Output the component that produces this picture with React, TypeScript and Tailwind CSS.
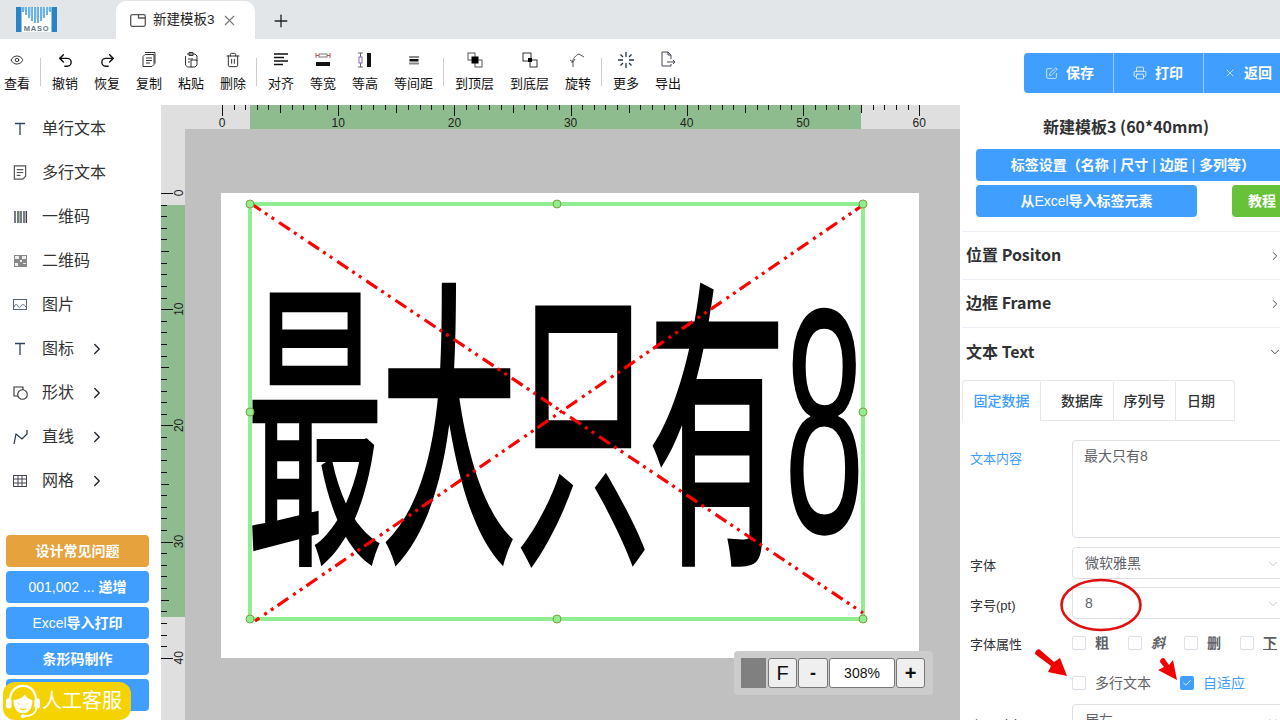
import React from 'react';
import { ChevronDown, ChevronRight, Check, X, Plus, Eye, Undo2, Redo2, Trash2, SquarePen, Printer } from 'lucide-react';

const UNIT = 11.62;

const Sep = () => <div className="h-[28px] w-[6px] shrink-0 pl-[2px]"><div className="h-full w-[1px] bg-[#cccccc]" /></div>;

const ToolIcon = ({ children }: { children: React.ReactNode }) => (
    <svg viewBox="0 0 18 18" className="h-[18px] w-[18px]" fill="none" stroke="#333" strokeWidth="1">{children}</svg>
);

const tools1 = [
    { label: '撤销', icon: <Undo2 className="h-[17px] w-[17px] text-[#111]" strokeWidth={2} /> },
    { label: '恢复', icon: <Redo2 className="h-[17px] w-[17px] text-[#111]" strokeWidth={2} /> },
    { label: '复制', icon: <ToolIcon><path d="M5 3.500h9v10l-2 2H3v-10zM5 1.500h10v11M6 7h6M6 9.500h6M6 12h4" /></ToolIcon> },
    { label: '粘贴', icon: <ToolIcon><path d="M5 3h8l2 2v5M3.500 5v9l2 2h4M7 1.500h4v3H7zM9 9h6v5l-2 2H9zM6 8h5M6 11h2" /></ToolIcon> },
    { label: '删除', icon: <Trash2 className="h-[16px] w-[16px] text-[#222]" strokeWidth={1.4} /> },
];

const tools2 = [
    { label: '对齐', w: 'w-[42px]', icon: <svg viewBox="0 0 18 18" className="h-[18px] w-[18px]"><path d="M2 3h14M2 6.500h10M2 10h14M2 13.500h9" stroke="#111" strokeWidth="1.500" /></svg> },
    { label: '等宽', w: 'w-[42px]', icon: <svg viewBox="0 0 18 18" className="h-[18px] w-[18px]"><path d="M2 2v5M16 2v5M2 4.500h14" stroke="#b55" fill="none" /><rect x="5" y="3" width="8" height="3" fill="#fff" stroke="#777" /><rect x="2" y="11" width="14" height="4" fill="#111" /></svg> },
    { label: '等高', w: 'w-[42px]', icon: <svg viewBox="0 0 18 18" className="h-[18px] w-[18px]"><path d="M2 2h5M2 16h5M4.500 2v14" stroke="#666" fill="none" /><rect x="3" y="6" width="3" height="6" fill="#fff" stroke="#86c" /><rect x="11" y="2" width="4" height="14" fill="#111" /></svg> },
    { label: '等间距', w: 'w-[55px]', icon: <svg viewBox="0 0 18 18" className="h-[18px] w-[18px]"><rect x="4" y="5" width="10" height="2" fill="#888" /><rect x="4.500" y="8" width="9" height="2.500" fill="#111" /><rect x="4" y="11.500" width="10" height="2" fill="#888" /></svg> },
];

const tools3 = [
    { label: '到顶层', w: 'w-[55px]', icon: <ToolIcon><rect x="2" y="2" width="7" height="7" stroke="#555" /><rect x="9" y="9" width="7" height="7" stroke="#555" /><rect x="5.500" y="5.500" width="7" height="7" fill="#000" stroke="none" /></ToolIcon> },
    { label: '到底层', w: 'w-[55px]', icon: <ToolIcon><rect x="2" y="2" width="8" height="8" stroke="#333" /><rect x="9" y="9" width="7" height="7" stroke="#333" /><rect x="7" y="7" width="4" height="4" fill="#000" stroke="none" /></ToolIcon> },
    { label: '旋转', w: 'w-[42px]', icon: <ToolIcon><path d="M3 12c1-5 4-8 7-9M10 3l5 3M1 9l3 2 2-3M4 11v5" stroke="#555" /></ToolIcon> },
];

const ToolItem = ({ label, icon, w = 'w-[42px]' }: { label: string; icon: React.ReactNode; w?: string }) => (
    <div className={`flex shrink-0 flex-col items-center ${w}`}>
        <div className="flex h-[20px] items-center justify-center">{icon}</div>
        <span className="mt-[5px] text-[13px] leading-[18px] text-[#111]">{label}</span>
    </div>
);

const Toolbar = () => (
    <div className="flex h-[66px] shrink-0 items-start bg-white pt-[11px]">
        <div className="flex items-center">
            <div className="w-[34px]"><ToolItem w="w-[34px]" label="查看" icon={<Eye className="h-[14px] w-[14px] text-[#222]" strokeWidth={1.5} />} /></div>
            <div className="w-[4px]" />
            <Sep />
            {tools1.map(t => <ToolItem key={t.label} {...t} />)}
            <Sep />
            {tools2.map(t => <ToolItem key={t.label} {...t} />)}
            <Sep />
            {tools3.map(t => <ToolItem key={t.label} {...t} />)}
            <Sep />
            <ToolItem label="更多" icon={
                <svg viewBox="0 0 18 18" className="h-[18px] w-[18px]" stroke="#234" strokeWidth="1.300">
                    <path d="M9 1v5M9 12v5M1 9h5M12 9h5M3.500 3.500l2.500 2.500M14.500 3.500L12 6M3.500 14.500L6 12M14.500 14.500L12 12" />
                </svg>
            } />
            <ToolItem label="导出" icon={
                <ToolIcon><path d="M12 8V4l-3-3H3v14h9v-2M9 1v3h3M8 11h8M14 9l2 2-2 2" stroke="#445" /></ToolIcon>
            } />
        </div>
        <div className="ml-auto mt-[3px] flex h-[40px] w-[256px] overflow-hidden rounded-l-[4px]">
            <div className="flex w-[89px] shrink-0 items-center gap-[8px] bg-[#409eff] pl-[21px] text-[14px] font-bold text-white">
                <SquarePen className="h-[13px] w-[13px]" strokeWidth={1.3} />保存
            </div>
            <div className="flex w-[90px] shrink-0 items-center gap-[8px] border-l border-[#a0cfff] bg-[#409eff] pl-[19px] text-[14px] font-bold text-white">
                <Printer className="h-[14px] w-[14px]" strokeWidth={1.3} />打印
            </div>
            <div className="flex w-[90px] shrink-0 items-center gap-[8px] border-l border-[#a0cfff] bg-[#409eff] pl-[20px] text-[14px] font-bold text-white">
                <X className="h-[12px] w-[12px]" strokeWidth={1.3} />返回
            </div>
        </div>
    </div>
);

const Logo = () => (
    <svg viewBox="0 0 41 25" className="h-[25px] w-[41px]">
        <rect width="41" height="25" fill="#2a83c4" />
        <rect x="5.500" width="30" height="25" fill="#fff" />
        <path d="M7 0v5M10 0v8M13 0v11M16 0v14M19 0v16M22 0v16M25 0v14M28 0v11M31 0v8M34 0v5" stroke="#5aa9e0" strokeWidth="1.800" />
        <path d="M8.500 0v4M14.500 0v9M20.500 0v12M26.500 0v9M32.500 0v4" stroke="#bcdcf4" strokeWidth="1.200" />
        <text x="20.500" y="24" textAnchor="middle" fontSize="7.500" fontWeight="bold" fill="#667788" letterSpacing="0.800">MASO</text>
    </svg>
);

const TabBar = () => (
    <div className="relative flex h-[39px] shrink-0 items-end bg-[#e3e6e9]">
        <div className="ml-[16px] mb-[7px] w-[100px]"><Logo /></div>
        <div className="flex h-[38px] w-[139px] items-center rounded-t-[10px] bg-white pl-[14px]">
            <svg viewBox="0 0 16 13" className="h-[13px] w-[16px]" fill="none" stroke="#555" strokeWidth="1.300"><rect x="0.700" y="0.700" width="14.600" height="11.600" rx="1.500" /><path d="M8.500 1v3h7" /></svg>
            <span className="ml-[7px] text-[13.500px] text-[#222]">新建模板3</span>
            <X className="ml-[6px] h-[17px] w-[17px] text-[#777]" strokeWidth={1.6} />
        </div>
        <Plus className="mb-[8px] ml-[16px] h-[20px] w-[20px] text-[#222]" strokeWidth={1.6} />
    </div>
);

const SideIcon = ({ kind }: { kind: string }) => {
    if (kind === 'T') return <svg viewBox="0 0 12 13" className="h-[13px] w-[12px]" fill="none" stroke="#2d4560" strokeWidth="1.300"><path d="M1 1.500h10M6 1.500V13" /></svg>;
    if (kind === 'doc') return <svg viewBox="0 0 14 16" className="h-[15px] w-[14px]" fill="none" stroke="#555" strokeWidth="1.300"><path d="M1 1h12v11l-3 3H1zM3.500 5h7M3.500 8h7M3.500 11h4" /></svg>;
    if (kind === 'bar') return <svg viewBox="0 0 13 12" className="h-[12px] w-[13px]"><path d="M1 0v12M4 0v12M7 0v12M10 0v12M12.300 0v12" stroke="#334" strokeWidth="1.300" /><path d="M5.500 0v12" stroke="#9c8" strokeWidth="1" /></svg>;
    if (kind === 'qr') return <svg viewBox="0 0 13 12" className="h-[12px] w-[13px]"><rect width="13" height="12" fill="#888" /><path d="M1 1h4v3H1zM8 1h4v3H8zM1 8h3v3H1zM6 5h2v2H6zM9 8h3v1H9z" fill="#eee" /></svg>;
    if (kind === 'img') return <svg viewBox="0 0 14 11" className="h-[11px] w-[14px]" fill="none" stroke="#567" strokeWidth="1"><rect x="0.500" y="0.500" width="13" height="10" /><path d="M1 8c1-3 3-3 4-1s2 2 3 0 3-2 5 1" /></svg>;
    if (kind === 'shape') return <svg viewBox="0 0 15 14" className="h-[14px] w-[15px]" fill="none" stroke="#333" strokeWidth="1.100"><path d="M5 10H1V1h9v3" /><circle cx="9.500" cy="8.500" r="4.800" /></svg>;
    if (kind === 'line') return <svg viewBox="0 0 15 15" className="h-[15px] w-[15px]" fill="none" stroke="#234" strokeWidth="1.200"><path d="M1 15L3 5l6 5 5-5V1" /></svg>;
    return <svg viewBox="0 0 14 12" className="h-[12px] w-[14px]" fill="none" stroke="#445" strokeWidth="1"><rect x="0.500" y="0.500" width="13" height="11" /><path d="M0 4h14M0 8h14M5 0v12M9 0v12" /></svg>;
};

const sideItems = [
    { label: '单行文本', kind: 'T' },
    { label: '多行文本', kind: 'doc' },
    { label: '一维码', kind: 'bar' },
    { label: '二维码', kind: 'qr' },
    { label: '图片', kind: 'img' },
    { label: '图标', kind: 'T', more: true },
    { label: '形状', kind: 'shape', more: true },
    { label: '直线', kind: 'line', more: true },
    { label: '网格', kind: 'grid', more: true },
];

// the latin part of these labels stays regular, only the chinese is bold
const Thin = ({ children }: { children: React.ReactNode }) => <span className="font-normal">{children}</span>;

const sideButtons = [
    { label: <>设计常见问题</>, bg: 'bg-[#e6a23c]' },
    { label: <><Thin>001,002 ... </Thin>递增</>, bg: 'bg-[#409eff]' },
    { label: <><Thin>Excel</Thin>导入打印</>, bg: 'bg-[#409eff]' },
    { label: <>条形码制作</>, bg: 'bg-[#409eff]' },
    { label: null, bg: 'bg-[#409eff]' },
];

const Sidebar = () => (
    <div className="relative flex w-[161px] shrink-0 flex-col bg-white">
        <div className="pt-[1px]">
            {sideItems.map(item => (
                <div key={item.label} className="flex h-[44px] items-center pt-[1px] text-[16px] text-[#333]">
                    <div className="flex w-[42px] justify-center pl-[6px] pr-[8px]"><SideIcon kind={item.kind} /></div>
                    <span>{item.label}</span>
                    {item.more && <ChevronRight className="ml-[14px] h-[18px] w-[18px] text-[#223]" strokeWidth={1.8} />}
                </div>
            ))}
        </div>
        <div className="mt-[33px] flex flex-col gap-[4px] px-[6px]">
            {sideButtons.map((b, i) => (
                <div key={i} className={`flex h-[32px] w-[143px] items-center justify-center whitespace-pre rounded-[4px] text-[14px] font-bold text-white ${b.bg}`}>
                    {b.label}
                </div>
            ))}
        </div>
        <div className="absolute bottom-0 left-[3px] flex h-[38px] w-[128px] items-center rounded-[12px] bg-[#f5d300]">
            <svg viewBox="0 0 38 38" className="h-[36px] w-[38px] shrink-0" fill="none">
                <path d="M6 20C6 9 12 3 20 3s14 6 14 17" stroke="#fff" strokeWidth="2.500" />
                <rect x="2" y="16" width="6" height="11" rx="3" fill="#fff" />
                <rect x="32" y="16" width="6" height="11" rx="3" fill="#fff" />
                <path d="M10 18c4 0 10-2 12-6 2 4 5 6 8 6 0 9-4 14-10 14S10 27 10 18z" fill="#fff" />
                <path d="M34 26c0 5-4 9-12 9" stroke="#fff" strokeWidth="1.800" />
                <circle cx="20" cy="35" r="2.200" fill="#fff" />
                <path d="M15 22h1M24 22h1M17 27c2 1.500 4 1.500 6 0" stroke="#f5d300" strokeWidth="1.400" />
            </svg>
            <span className="ml-[1px] text-[20px] text-white">人工客服</span>
        </div>
    </div>
);

const HRuler = () => {
    const ticks = Array.from({ length: 61 }, (_, i) => i);
    return (
        <svg width="799" height="24" className="block shrink-0">
            <rect width="799" height="24" fill="#dfdfdf" />
            <rect x="89" width="611" height="24" fill="#8fbc8f" />
            {ticks.map(i => {
                const x = Math.round(61 + i * UNIT) + 0.5;
                const h = i % 10 === 0 ? 11 : i % 5 === 0 ? 8 : 5;
                return <line key={i} x1={x} x2={x} y1="0" y2={h} stroke="#111" />;
            })}
            {[0, 10, 20, 30, 40, 50, 60].map(n => (
                <text key={n} x={61 + n * UNIT} y="22" textAnchor="middle" fontSize="12" fill="#222">{n}</text>
            ))}
        </svg>
    );
};

const VRuler = () => {
    const ticks = Array.from({ length: 41 }, (_, i) => i);
    return (
        <svg width="24" height="591" className="block shrink-0">
            <rect width="24" height="591" fill="#dfdfdf" />
            <rect y="76" width="24" height="412" fill="#8fbc8f" />
            {ticks.map(i => {
                const y = Math.round(64 + i * UNIT) + 0.5;
                const h = i % 10 === 0 ? 12 : i % 5 === 0 ? 8 : 6;
                return <line key={i} y1={y} y2={y} x1="0" x2={h} stroke="#111" />;
            })}
            {[0, 10, 20, 30, 40].map(n => {
                const y = 64 + n * UNIT;
                return <text key={n} transform={`translate(22 ${y}) rotate(-90)`} textAnchor="middle" fontSize="12" fill="#222">{n}</text>;
            })}
        </svg>
    );
};

const handles = [[29, 11], [336, 11], [642, 11], [29, 219], [642, 219], [29, 426], [336, 426], [642, 426]];

const Canvas = () => (
    <div className="relative min-w-0 flex-1 overflow-hidden bg-[#c0c0c0]">
        <div className="relative ml-[36px] mt-[64px] h-[465px] w-[698px] bg-white">
            <div className="absolute left-[25px] top-[62px] origin-top-left scale-y-[2.22] whitespace-nowrap text-[138px] font-medium leading-none tracking-[-4px] text-black [font-family:'Noto_Sans_CJK_SC',sans-serif]">
                最大只有<span className="inline-block -translate-y-[4px] pl-[2px] text-[145px] font-normal [font-family:'Liberation_Sans',sans-serif]">8</span>
            </div>
            <svg width="698" height="465" className="absolute left-0 top-0">
                <rect x="29" y="11" width="613" height="415" fill="none" stroke="#90ee90" strokeWidth="4" />
                <path d="M29 10L642 420M645 10L34 428" stroke="#ff0000" strokeWidth="3.200" strokeDasharray="13 5 3 5 3 6" fill="none" />
                {handles.map(([x, y]) => <circle key={`${x}-${y}`} cx={x} cy={y} r="4" fill="#90ee90" stroke="#7f9f3f" />)}
            </svg>
        </div>
        <div className="absolute left-[549px] top-[522px] flex h-[44px] w-[199px] items-center gap-[1px] rounded-[4px] bg-[#cccccc] pl-[7px]">
            <div className="mr-[1px] h-[30px] w-[25px] bg-[#808080]" />
            <div className="flex h-[30px] w-[29px] items-center justify-center rounded-[3px] border border-[#777] bg-[#efefef] text-[20px] text-[#111]">F</div>
            <div className="flex h-[30px] w-[30px] items-center justify-center rounded-[3px] border border-[#777] bg-[#efefef] text-[18px] font-bold text-[#111]">-</div>
            <div className="flex h-[30px] w-[66px] items-center justify-center rounded-[3px] border border-[#777] bg-white text-[14px] text-[#111]">308%</div>
            <div className="flex h-[30px] w-[29px] items-center justify-center rounded-[3px] border border-[#777] bg-[#efefef] text-[20px] font-bold text-[#111]">+</div>
        </div>
    </div>
);

const headFont = "[font-family:'Noto_Sans_CJK_SC',sans-serif]";

const CollapseHead = ({ title }: { title: string }) => (
    <div className={`flex h-[48px] items-center justify-between border-b border-[#ebeef5] pl-[4px] pr-[10px] text-[16px] font-bold text-[#303133] ${headFont}`}>
        <span className="pb-[3px]">{title}</span>
        <ChevronRight className="h-[14px] w-[14px]" strokeWidth={1.5} />
    </div>
);

const SelectBox = ({ value, className = '' }: { value: string; className?: string }) => (
    <div className={`flex h-[32px] w-[213px] items-center justify-between rounded-[4px] border border-[#dcdfe6] pl-[12px] pr-[4px] pt-[1px] text-[14px] text-[#606266] ${className}`}>
        {value}
        <ChevronDown className="h-[14px] w-[14px] text-[#c0c4cc]" strokeWidth={1.5} />
    </div>
);

const Box = () => <div className="h-[14px] w-[14px] shrink-0 rounded-[2px] border border-[#dcdfe6] bg-white" />;

const attrs = [
    { label: '粗', cls: 'font-bold' },
    { label: '斜', cls: 'font-bold italic' },
    { label: '删', cls: 'font-bold' },
    { label: '下', cls: 'font-bold underline' },
];

const RightPanel = () => (
    <div className="relative w-[320px] shrink-0 overflow-hidden bg-white">
        <div className="w-[332px]">
            <div className={`flex h-[44px] items-center justify-center pb-[3px] text-[16px] font-bold text-[#303133] ${headFont}`}>新建模板3 (60*40mm)</div>
            <div className="ml-[16px] flex h-[32px] w-[310px] items-center justify-center whitespace-pre rounded-[4px] bg-[#409eff] pl-[4px] text-[14px] font-bold text-white">
                标签设置（名称<Thin> | </Thin>尺寸<Thin> | </Thin>边距<Thin> | </Thin>多列等）
            </div>
            <div className="ml-[16px] mt-[4px] flex gap-[35px]">
                <div className="flex h-[32px] w-[221px] items-center justify-center rounded-[4px] bg-[#409eff] text-[14px] font-bold text-white">从<Thin>Excel</Thin>导入标签元素</div>
                <div className="flex h-[32px] w-[60px] items-center justify-center rounded-[4px] bg-[#67c23a] text-[14px] font-bold text-white">教程</div>
            </div>
            <div className="ml-[2px] mt-[14px] border-t border-[#ebeef5]">
                <CollapseHead title="位置 Positon" />
                <CollapseHead title="边框 Frame" />
                <div className={`flex h-[48px] items-center justify-between pl-[4px] pr-[10px] text-[16px] font-bold text-[#303133] ${headFont}`}>
                    <span className="pb-[3px]">文本 Text</span>
                    <ChevronDown className="h-[14px] w-[14px]" strokeWidth={1.5} />
                </div>
            </div>
            <div className="ml-[2px] mt-[4px] flex h-[41px] w-[273px] rounded-t-[4px] border border-b-0 border-[#e4e7ed] pt-[1px] text-[14px] text-[#303133]">
                <div className="flex w-[77px] items-center justify-center font-medium text-[#409eff]">固定数据</div>
                <div className="flex w-[73px] items-center justify-end border-b border-l border-[#e4e7ed] pr-[10px] font-medium">数据库</div>
                <div className="flex w-[62px] items-center justify-center border-b border-l border-[#e4e7ed] font-medium">序列号</div>
                <div className="flex flex-1 items-center border-b border-l border-[#e4e7ed] pl-[11px] font-medium">日期</div>
            </div>
            <div className="ml-[10px] mt-[19px] flex">
                <div className="w-[102px] shrink-0 pt-[10px] text-[13px] leading-[18px] text-[#409eff]">文本内容</div>
                <div className="h-[98px] w-[213px] rounded-[4px] border border-[#dcdfe6] px-[11px] py-[5px] text-[14px] leading-[20px] text-[#606266]">最大只有8</div>
            </div>
            <div className="ml-[10px] mt-[9px] flex items-center">
                <div className="w-[102px] shrink-0 pt-[5px] text-[13px] text-[#303133]">字体</div>
                <SelectBox value="微软雅黑" />
            </div>
            <div className="ml-[10px] mt-[8px] flex items-center">
                <div className="w-[102px] shrink-0 pt-[5px] text-[13px] text-[#303133]">字号(pt)</div>
                <SelectBox value="8" />
            </div>
            <div className="ml-[10px] mt-[17px] flex h-[14px] items-center">
                <div className="w-[102px] shrink-0 pt-[4px] text-[13px] leading-[14px] text-[#303133]">字体属性</div>
                {attrs.map(a => (
                    <div key={a.label} className="flex w-[56px] shrink-0 items-center gap-[9px]">
                        <Box />
                        <span className={`text-[14px] text-[#606266] ${a.cls}`}>{a.label}</span>
                    </div>
                ))}
            </div>
            <div className="ml-[112px] mt-[26px] flex h-[14px] items-center">
                <Box />
                <span className="ml-[9px] w-[85px] text-[14px] text-[#606266]">多行文本</span>
                <div className="flex h-[14px] w-[14px] items-center justify-center rounded-[2px] bg-[#409eff]">
                    <Check className="h-[10px] w-[10px] text-white" strokeWidth={2} />
                </div>
                <span className="ml-[9px] text-[14px] text-[#409eff]">自适应</span>
            </div>
            <div className="ml-[10px] mt-[14px] flex items-center">
                <div className="w-[102px] shrink-0 pt-[12px] text-[13px] text-[#303133]">水平对齐</div>
                <SelectBox value="居左" />
            </div>
        </div>
        <svg width="320" height="615" className="pointer-events-none absolute left-0 top-0">
            <ellipse cx="141" cy="500" rx="39.500" ry="25" fill="none" stroke="#e01010" strokeWidth="2.600" />
            <path d="M75 549Q75 545 79 544L94 557L100 553L107 571L88 567L91 561Z" fill="#f00000" />
            <path d="M200 557Q200 553 204 553L209 560L213 555L217 575L198 565L204 562Z" fill="#f00000" />
        </svg>
    </div>
);

export default function App() {
    return (
        <div className="flex h-[720px] w-[1280px] flex-col overflow-hidden bg-white [font-family:'Liberation_Sans','Noto_Sans_CJK_SC',sans-serif]">
            <TabBar />
            <Toolbar />
            <div className="flex min-h-0 flex-1">
                <Sidebar />
                <div className="flex w-[799px] shrink-0 flex-col">
                    <HRuler />
                    <div className="flex min-h-0 flex-1">
                        <VRuler />
                        <Canvas />
                    </div>
                </div>
                <RightPanel />
            </div>
        </div>
    );
}
